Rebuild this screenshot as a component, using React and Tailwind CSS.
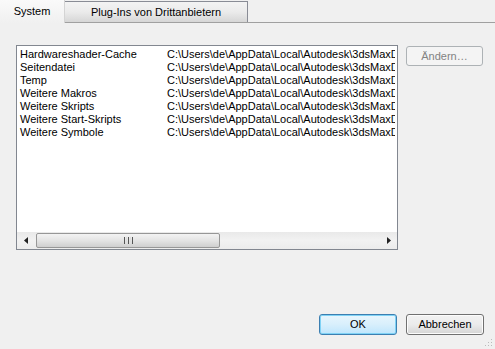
import React from "react";

const rows = [
  "Hardwareshader-Cache",
  "Seitendatei",
  "Temp",
  "Weitere Makros",
  "Weitere Skripts",
  "Weitere Start-Skripts",
  "Weitere Symbole",
];
const path = "C:\\Users\\de\\AppData\\Local\\Autodesk\\3dsMaxDe";

export default function App() {
  return (
    <div
      className="w-[495px] h-[349px] bg-[#f0f0f0] text-[11px] text-black flex flex-col overflow-hidden relative"
      style={{ fontFamily: '"Liberation Sans", Arial, sans-serif' }}
    >
      {/* tabs */}
      <div className="flex h-[23px] items-end border-b border-[#a0a0a0] shrink-0">
        <div className="relative w-[65px] h-[23px] -mb-px bg-gradient-to-b from-[#fafafa] to-[#f0f0f0] border-r border-[#d4d4d4] flex items-center justify-center pb-[1px] z-10">
          System
        </div>
        <div className="w-[183px] h-[21px] bg-gradient-to-b from-[#f3f3f3] via-[#ebebeb] to-[#d6d6d6] border border-l-0 border-b-0 border-[#898c95] flex items-center justify-center pt-[1px]">
          Plug-Ins von Drittanbietern
        </div>
      </div>

      {/* content */}
      <div className="flex pl-[16px] pt-[22px] gap-[8px]">
        <div className="w-[382px] h-[205px] bg-white border border-[#828790] flex flex-col">
          <div className="flex-1 pt-[2px] pl-[2px] overflow-hidden">
            {rows.map((r) => (
              <div key={r} className="flex h-[13px] items-center leading-[13px] whitespace-nowrap">
                <div className="w-[148px] shrink-0 pl-[1px]">{r}</div>
                <div className="overflow-hidden w-[228px]">{path}</div>
              </div>
            ))}
          </div>
          {/* horizontal scrollbar */}
          <div className="h-[17px] bg-gradient-to-b from-[#e9e9e9] via-[#f2f2f2] to-[#ececec] flex items-center shrink-0">
            <div className="w-[17px] h-[17px] flex items-center justify-center">
              <svg width="4" height="7" viewBox="0 0 4 7">
                <path d="M4 0 L0 3.5 L4 7 Z" fill="#222" />
              </svg>
            </div>
            <div className="ml-[2px] w-[184px] h-[15px] rounded-[2px] border border-[#979797] bg-gradient-to-b from-[#f3f3f3] via-[#e4e4e4] to-[#cfcfcf] flex items-center justify-center">
              <div className="flex gap-[1px]">
                <div className="w-[1px] h-[7px] bg-[#555]" />
                <div className="w-[1px] h-[7px] bg-[#ddd]" />
                <div className="w-[1px] h-[7px] bg-[#555]" />
                <div className="w-[1px] h-[7px] bg-[#ddd]" />
                <div className="w-[1px] h-[7px] bg-[#555]" />
              </div>
            </div>
            <div className="flex-1" />
            <div className="w-[17px] h-[17px] flex items-center justify-center">
              <svg width="4" height="7" viewBox="0 0 4 7">
                <path d="M0 0 L4 3.5 L0 7 Z" fill="#222" />
              </svg>
            </div>
          </div>
        </div>
        <div className="pt-[1px]">
          <div className="w-[77px] h-[20px] rounded-[3px] border border-[#adb2b5] bg-[#f4f4f4] text-[#838383] flex items-center justify-center leading-[13px]">
            Ändern…
          </div>
        </div>
      </div>

      {/* bottom buttons */}
      <div className="flex justify-end gap-[9px] mt-[64px] pr-[11px]">
        <div className="w-[78px] h-[21px] rounded-[3px] border border-[#3c7fb1] shadow-[inset_0_0_0_1px_#7fd2f5] bg-gradient-to-b from-[#e8f6fd] via-[#d8effc] to-[#bee6fd] flex items-center justify-center">
          OK
        </div>
        <div className="w-[78px] h-[21px] rounded-[3px] border border-[#707070] shadow-[inset_0_0_0_1px_#fcfcfc] bg-gradient-to-b from-[#f2f2f2] via-[#ebebeb] to-[#d5d5d5] flex items-center justify-center">
          Abbrechen
        </div>
      </div>

      {/* resize grip */}
      <svg className="absolute right-[2px] bottom-[2px]" width="8" height="8" viewBox="0 0 8 8">
        <rect x="6" y="0" width="1" height="1" fill="#bbb" />
        <rect x="3" y="3" width="1" height="1" fill="#bbb" />
        <rect x="6" y="3" width="1" height="1" fill="#bbb" />
        <rect x="0" y="6" width="1" height="1" fill="#bbb" />
        <rect x="3" y="6" width="1" height="1" fill="#bbb" />
        <rect x="6" y="6" width="1" height="1" fill="#bbb" />
      </svg>
    </div>
  );
}
